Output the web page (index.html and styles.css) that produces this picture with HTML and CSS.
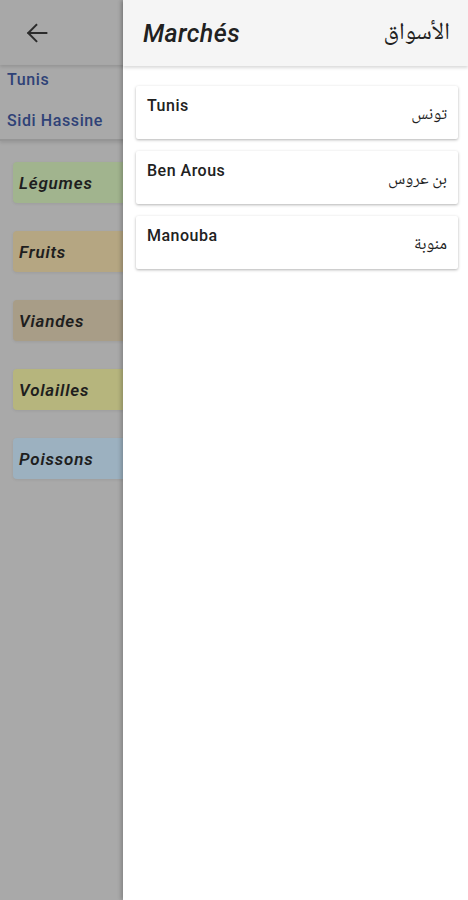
FILE: index.html
```html
<!DOCTYPE html>
<html lang="fr">
<head>
    <meta charset="UTF-8">
    <meta name="viewport" content="width=device-width, initial-scale=1.0">
    <title>Marchés</title>
    <link rel="stylesheet" href="styles.css">
</head>
<body>
    <div class="app">
        <!-- page behind the drawer (shown dimmed) -->
        <div class="page">
            <div class="topbar">
                <svg class="back" viewBox="0 0 24 24" width="30" height="30">
                    <path d="M19.5 12H5 M11.5 5.5L5 12l6.5 6.5" fill="none" stroke="#2b2b2b" stroke-width="1.6" stroke-linecap="square"/>
                </svg>
            </div>
            <div class="location">
                <div class="loc-item">Tunis</div>
                <div class="loc-item">Sidi Hassine</div>
            </div>
            <div class="categories">
                <div class="chip chip-legumes">Légumes</div>
                <div class="chip chip-fruits">Fruits</div>
                <div class="chip chip-viandes">Viandes</div>
                <div class="chip chip-volailles">Volailles</div>
                <div class="chip chip-poissons">Poissons</div>
            </div>
        </div>

        <aside class="drawer">
            <div class="drawer-header">
                <span class="drawer-title">Marchés</span>
                <span class="drawer-title-ar" dir="rtl">الأسواق</span>
            </div>
            <div class="market-list">
                <div class="market-card">
                    <span class="market-name">Tunis</span>
                    <span class="market-ar" dir="rtl">تونس</span>
                </div>
                <div class="market-card">
                    <span class="market-name">Ben Arous</span>
                    <span class="market-ar" dir="rtl">بن عروس</span>
                </div>
                <div class="market-card">
                    <span class="market-name">Manouba</span>
                    <span class="market-ar" dir="rtl">منوبة</span>
                </div>
            </div>
        </aside>
    </div>
</body>
</html>
```

FILE: styles.css
```css
* {
    box-sizing: border-box;
}
body {
    margin: 0;
    font-family: Roboto, "Noto Sans", Arial, sans-serif;
    background-color: #a9a9a9;
}
.app {
    position: relative;
    width: 468px;
    height: 900px;
    overflow: hidden;
}
.page {
    width: 100%;
    height: 100%;
    background-color: #a9a9a9;
}
.topbar {
    height: 65px;
    display: flex;
    align-items: center;
    padding-left: 22px;
    background-color: #a8a8a8;
    box-shadow: 0 2px 3px rgba(0, 0, 0, 0.12);
}
.back {
    display: block;
}
.location {
    display: flex;
    flex-direction: column;
    gap: 13px;
    padding: 1px 7px 4px;
    border-bottom: 2px solid #959595;
    box-shadow: 0 2px 3px rgba(0, 0, 0, 0.1);
}
.loc-item {
    line-height: 28px;
    font-size: 16px;
    font-weight: 500;
    letter-spacing: 0.6px;
    color: #2f4277;
}
.categories {
    display: flex;
    flex-direction: column;
    gap: 28px;
    padding: 21px 0 0 13px;
}
.chip {
    width: 220px;
    height: 41px;
    display: flex;
    align-items: center;
    padding-left: 6px;
    border-radius: 4px;
    font-size: 17px;
    font-weight: 600;
    font-style: italic;
    letter-spacing: 0.8px;
    color: #1e1e1e;
    box-shadow: 0 1px 3px rgba(0, 0, 0, 0.08);
}
.chip-legumes {
    background-color: #a1b48e;
}
.chip-fruits {
    background-color: #b5a682;
}
.chip-viandes {
    background-color: #a89d87;
}
.chip-volailles {
    background-color: #b6b57d;
}
.chip-poissons {
    background-color: #9cb1c0;
}

.drawer {
    position: absolute;
    top: 0;
    right: 0;
    bottom: 0;
    width: 345px;
    background-color: #ffffff;
    box-shadow: -2px 0 4px rgba(0, 0, 0, 0.22);
}
.drawer-header {
    height: 66px;
    display: flex;
    align-items: center;
    justify-content: space-between;
    padding: 0 18px 0 20px;
    background-color: #f5f5f5;
    box-shadow: 0 2px 3px rgba(0, 0, 0, 0.15);
}
.drawer-title {
    font-size: 25px;
    font-weight: 500;
    font-style: italic;
    letter-spacing: 0.4px;
    color: #212121;
}
.drawer-title-ar {
    font-family: "Noto Naskh Arabic", "DejaVu Sans", serif;
    font-size: 24px;
    color: #212121;
}
.market-list {
    display: flex;
    flex-direction: column;
    gap: 12px;
    padding: 20px 10px 0 13px;
}
.market-card {
    height: 53px;
    display: flex;
    align-items: flex-start;
    justify-content: space-between;
    padding: 10px 11px 0;
    background-color: #ffffff;
    border-radius: 2px;
    box-shadow: 0 1px 3px rgba(0, 0, 0, 0.3);
}
.market-name {
    font-size: 16px;
    font-weight: 500;
    letter-spacing: 0.5px;
    color: #212121;
}
.market-ar {
    margin-top: 5px;
    font-family: "Noto Naskh Arabic", "DejaVu Sans", serif;
    font-size: 17px;
    color: #212121;
}
```
